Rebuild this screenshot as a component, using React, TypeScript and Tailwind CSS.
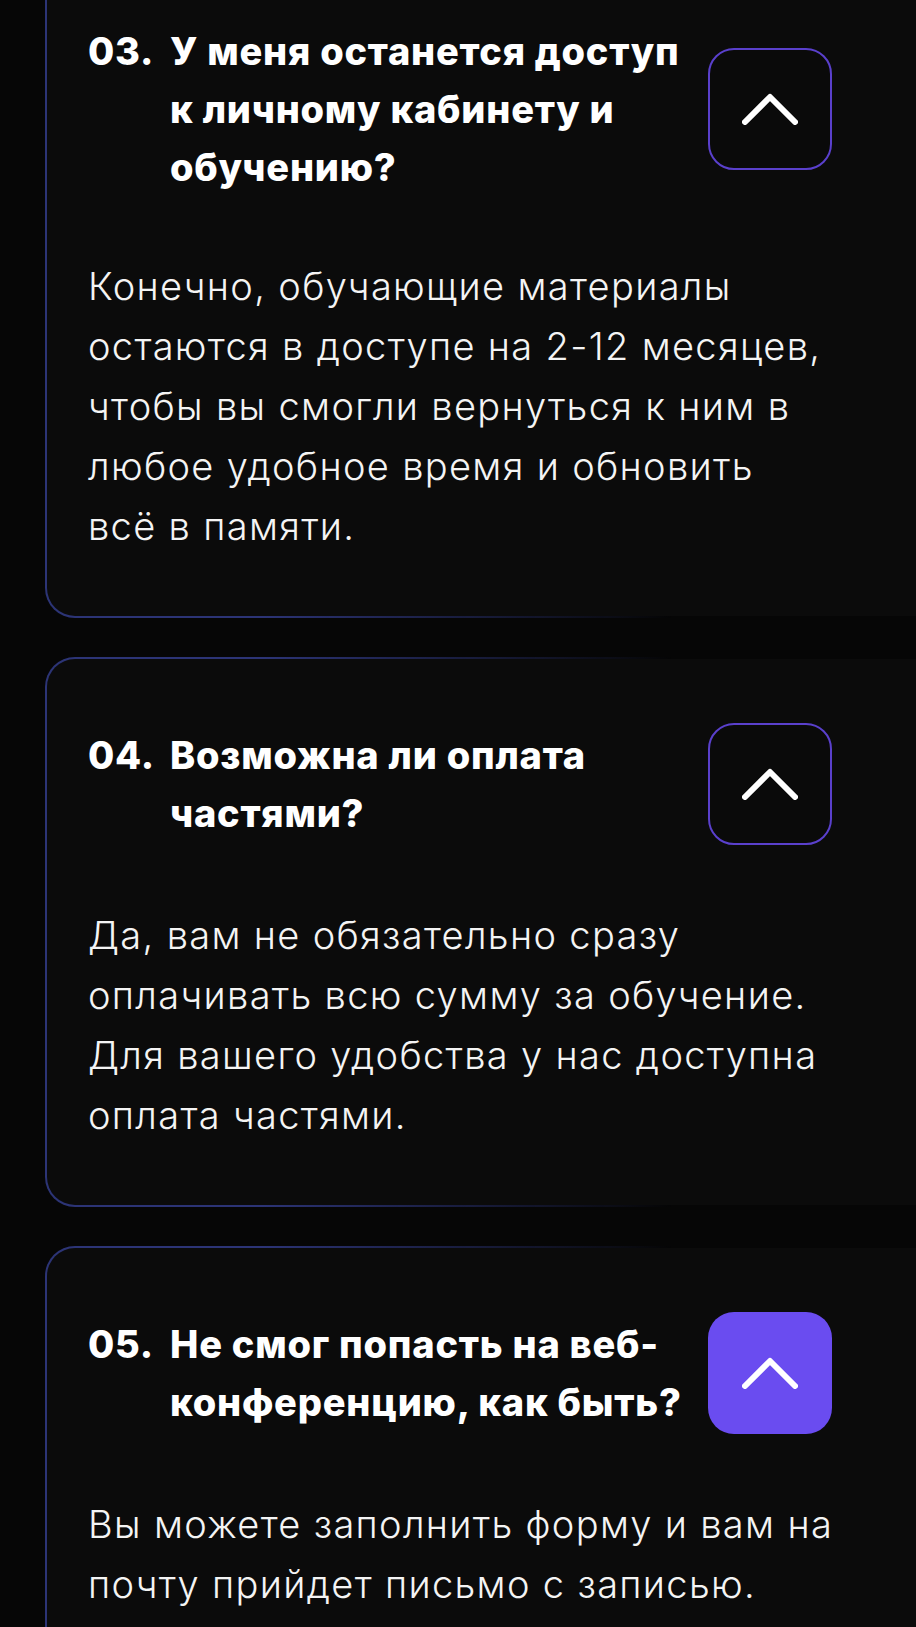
type Faq = {
  num: string;
  question: string;
  answer: string;
  open?: boolean;
};

const faqs: Faq[] = [
  {
    num: "03.",
    question: "У меня останется доступ к личному кабинету и обучению?",
    answer:
      "Конечно, обучающие материалы остаются в доступе на 2-12 месяцев, чтобы вы смогли вернуться к ним в любое удобное время и обновить всё\u00a0в памяти.",
  },
  {
    num: "04.",
    question: "Возможна ли оплата частями?",
    answer:
      "Да, вам не обязательно сразу оплачивать всю сумму за обучение. Для вашего удобства у нас доступна оплата частями.",
  },
  {
    num: "05.",
    question: "Не смог попасть на веб-конференцию, как быть?",
    answer: "Вы можете заполнить форму и вам на почту прийдет письмо с записью.",
    open: true,
  },
];

function Chevron() {
  return (
    <svg width="56" height="32" viewBox="0 0 56 32" fill="none">
      <path
        d="M3 29 L28 4 L53 29"
        stroke="white"
        strokeWidth="6"
        strokeLinecap="round"
        strokeLinejoin="round"
      />
    </svg>
  );
}

function FaqCard({ faq }: { faq: Faq }) {
  return (
    <div className="ml-[45px] rounded-l-[30px] border-y-2 border-l-2 border-r-0 border-transparent pt-[64px] pb-[60px] pl-[41px] pr-[84px] [background:linear-gradient(#0b0b0b,#0b0b0b)_padding-box,linear-gradient(90deg,#2c3476_0%,#2c3476_25%,transparent_72%)_border-box]">
      <div className="flex items-center justify-between gap-[16px]">
        <div className="flex flex-1 text-[38px] font-extrabold leading-[58px] tracking-[0.02em] text-white">
          <span className="w-[82px] shrink-0">{faq.num}</span>
          <span className="flex-1">{faq.question}</span>
        </div>
        <button
          className={
            faq.open
              ? "flex h-[122px] w-[124px] shrink-0 items-center justify-center rounded-[26px] bg-[#6a4cf0]"
              : "flex h-[122px] w-[124px] shrink-0 items-center justify-center rounded-[26px] border-2 border-[#5a40cc] bg-[#0a0a0a]"
          }
        >
          <Chevron />
        </button>
      </div>
      <p className="mt-[60px] -mr-[30px] text-[38px] font-light leading-[60px] tracking-[0.035em] text-[#f4f4f4]">
        {faq.answer}
      </p>
    </div>
  );
}

export default function App() {
  return (
    <div className="h-[1627px] w-full overflow-hidden bg-[#060606] font-['Inter',_'Noto_Sans',_sans-serif]">
      <div className="-mt-[44px] flex flex-col gap-[39px]">
        {faqs.map((faq) => (
          <FaqCard key={faq.num} faq={faq} />
        ))}
      </div>
    </div>
  );
}
